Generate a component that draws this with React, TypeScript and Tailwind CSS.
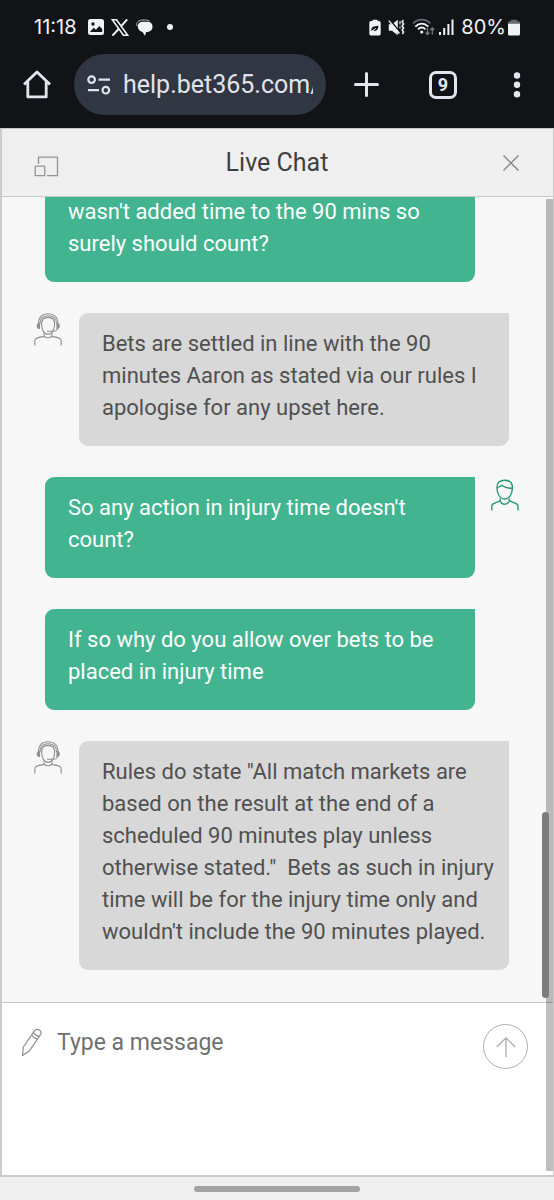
import type { ReactNode } from "react";

interface Message {
  from: "user" | "agent";
  text: string;
  showAvatar: boolean;
}

const messages: Message[] = [
  {
    from: "user",
    text: "wasn't added time to the 90 mins so surely should count?",
    showAvatar: false,
  },
  {
    from: "agent",
    text: "Bets are settled in line with the 90 minutes Aaron as stated via our rules I apologise for any upset here.",
    showAvatar: true,
  },
  {
    from: "user",
    text: "So any action in injury time doesn't count?",
    showAvatar: true,
  },
  {
    from: "user",
    text: "If so why do you allow over bets to be placed in injury time",
    showAvatar: false,
  },
  {
    from: "agent",
    text: 'Rules do state "All match markets are based on the result at the end of a scheduled 90 minutes play unless otherwise stated."  Bets as such in injury time will be for the injury time only and wouldn\'t include the 90 minutes played.',
    showAvatar: true,
  },
];

function StatusBar() {
  return (
    <div className="flex h-[54px] items-center justify-between pl-[34px] pr-[34px] font-[Inter,sans-serif] text-[20px] text-[#f1f2f6]">
      <div className="flex items-center">
        <span className="mr-[11px]">11:18</span>
        {/* gallery */}
        <svg width="16" height="16" viewBox="0 0 16 16" className="mr-[7px]">
          <rect width="16" height="16" rx="2.5" fill="#f1f2f6" />
          <circle cx="5" cy="5" r="1.7" fill="#111317" />
          <path d="M2 13l3.7-4.3 2.3 2 3.2-3.6L14.2 10v3z" fill="#111317" />
        </svg>
        {/* X */}
        <svg width="18" height="17" viewBox="0 0 18 17" className="mr-[7px]" fill="none" stroke="#f1f2f6">
          <path d="M1.3.8h4.2l11.2 15.4h-4.2z" strokeWidth="1.6" />
          <path d="M16.2.4L10 7.4M7.6 10L1.4 16.6" strokeWidth="2" />
        </svg>
        {/* chat */}
        <svg width="17" height="17" viewBox="0 0 17 17" className="mr-[14px]">
          <path d="M1 7C-.3 3.300 3 1 7 1c3.500 0 5 .2 6.500 1" fill="none" stroke="#b8bac0" strokeWidth="1" />
          <path d="M6.500 2.800h5c3 0 5 2 5 4.800 0 3.400-2.200 5.400-5 5.400h-1.300L9 16.800 6.500 13C3.800 12.500 1.800 10.500 1.800 7.600c0-2.800 2-4.800 4.700-4.800z" fill="#f1f2f6" />
        </svg>
        <span className="size-[6px] rounded-full bg-[#f1f2f6]" />
      </div>
      <div className="flex items-center">
        {/* battery saver */}
        <svg width="12" height="17" viewBox="0 0 12 17" className="mr-[7px]">
          <path d="M3.500 2V.8h5V2H10a1.700 1.700 0 0 1 1.700 1.700v11A1.700 1.700 0 0 1 10 16.400H2A1.700 1.700 0 0 1 .3 14.700v-11A1.700 1.700 0 0 1 2 2z" fill="#f1f2f6" />
          <path d="M2.300 12c-.3-3.500 2-5 7.200-5.200-.3 4-2.300 5.700-5.200 5.200l2.500-2.500" fill="#111317" />
          <path d="M2 12.700l5-3.400" stroke="#f1f2f6" strokeWidth=".8" />
        </svg>
        {/* vibrate */}
        <svg width="17" height="17" viewBox="0 0 17 17" className="mr-[7px]">
          <path d="M.8 5.300H4L9.800.8v15.400L4 11.700H.8z" fill="#f1f2f6" />
          <path d="M1.800.8l9.500 11.500" stroke="#111317" strokeWidth="1.500" />
          <path d="M.8 1.600l10.700 12.900" stroke="#f1f2f6" strokeWidth="1.400" />
          <path d="M12 2v3.500M12 7.500v2" stroke="#f1f2f6" strokeWidth="1.200" />
          <path d="M15.300 1l-1.200 2 1.500 2-1.500 2 1.500 2-1.500 2 1.500 2-1.200 2" fill="none" stroke="#f1f2f6" strokeWidth="1.500" />
        </svg>
        {/* wifi */}
        <svg width="23" height="18" viewBox="0 0 23 18" className="mr-[4px]" fill="none">
          <path d="M1 5.500C6 .3 13.500.3 18.500 5.500" stroke="#65676c" strokeWidth="1.800" />
          <path d="M3.300 8.600c4-4 9-4 13 0M6 11.300c2.300-2.200 5.200-2.200 7.500 0" stroke="#f1f2f6" strokeWidth="1.800" />
          <circle cx="9.700" cy="14" r="1.600" fill="#f1f2f6" />
          <path d="M15.500 10v6.500M13.500 14.500l2 2 2-2M20.300 16.500V10M18.300 12l2-2 2 2" stroke="#777a80" strokeWidth="1.300" />
        </svg>
        {/* signal */}
        <svg width="15" height="16" viewBox="0 0 15 16" className="mr-[7px]" fill="#f1f2f6">
          <path d="M0 13h2v3H0zM4.200 9h2v7h-2zM8.400 5h2v11h-2zM12.500.500h2V16h-2z" />
        </svg>
        <span className="mr-[2px]">80%</span>
        {/* battery */}
        <svg width="12" height="17" viewBox="0 0 12 17">
          <path d="M3 2V.8h6V2h1a2 2 0 0 1 2 2v1H0V4a2 2 0 0 1 2-2z" fill="#66686d" />
          <path d="M0 4.700h12V15a1.500 1.500 0 0 1-1.500 1.500h-9A1.500 1.500 0 0 1 0 15z" fill="#f1f2f6" />
        </svg>
      </div>
    </div>
  );
}

function BrowserBar() {
  return (
    <div className="flex h-[61px] items-center pl-[23px] pr-[29px]">
      <button aria-label="Home" className="mr-[23px]">
        <svg width="28" height="29" viewBox="0 0 28 29" fill="none" stroke="#e4e5ee" strokeWidth="2.800" strokeLinejoin="round">
          <path d="M1 14.600L14 1.900l13 12.700" />
          <path d="M4.800 12v14.900h18.400V12" />
        </svg>
      </button>
      <div className="flex h-[61px] min-w-0 flex-1 items-center rounded-full bg-[#313643] pl-[13px] pr-[13px]">
        <svg width="24" height="20" viewBox="0 0 24 20" fill="none" stroke="#e1e3ec" strokeWidth="2.200" className="mr-[12px] shrink-0">
          <circle cx="4.600" cy="4.600" r="3.300" />
          <path d="M11.500 4.600H23M1 15.200h11" />
          <circle cx="18.800" cy="15.200" r="3.300" />
        </svg>
        <input
          aria-label="Address"
          readOnly
          defaultValue="help.bet365.com/"
          className="w-full min-w-0 bg-transparent text-[25px] text-[#e1e3ec] outline-none"
        />
      </div>
      <button aria-label="New tab" className="ml-[28px]">
        <svg width="25" height="25" viewBox="0 0 25 25" stroke="#e4e5ee" strokeWidth="3" strokeLinecap="round">
          <path d="M12.500 1.500v22M1.500 12.500h22" />
        </svg>
      </button>
      <button
        aria-label="9 open tabs"
        className="ml-[50px] flex size-[28px] items-center justify-center rounded-[7px] border-3 border-[#e4e5ee] text-[18px] font-bold text-[#e4e5ee]"
      >
        9
      </button>
      <button aria-label="Menu" className="ml-[52px]">
        <svg width="16" height="26" viewBox="0 0 16 26" fill="#e4e5ee">
          <circle cx="8" cy="3.500" r="3.200" />
          <circle cx="8" cy="12.800" r="3.200" />
          <circle cx="8" cy="22.200" r="3.200" />
        </svg>
      </button>
    </div>
  );
}

function AgentAvatar() {
  return (
    <svg width="28" height="34" viewBox="0 0 28 34" fill="none" stroke="#8f8f8f" strokeWidth="1.100">
      <path d="M4.500 11C4.500 4.500 8 .8 14 .8S24 4.500 24 11" />
      <path d="M6 11C6 5.500 9 2.800 14 2.800s8.500 2.700 8.500 8.200" />
      <path d="M7.600 11c0-4.200 2.400-6.600 6.500-6.600s6.500 2.400 6.500 6.600c0 6-2.500 10.300-6.500 10.300S7.600 17 7.600 11z" />
      <path d="M5.500 10.500c-3 0-3 5 0 5zM23 10.500c3 0 3 5 0 5z" fill="#8f8f8f" />
      <path d="M23.500 15.500c-.4 2.200-2.500 2.800-5 2.700h-5.500" />
      <path d="M10 20.500v2.300c1 2.500 7 2.500 8 0v-2.300" />
      <path d="M.8 32.500v-4.500c0-3 2.500-4 9-4.400M27.200 32.500v-4.500c0-3-2.500-4-9-4.400" />
    </svg>
  );
}

function UserAvatar() {
  return (
    <svg width="28" height="34" viewBox="0 0 28 34" fill="none" stroke="#289871" strokeWidth="1.400">
      <path d="M6 10.500C6 5.500 8.500 3.300 13.700 3.300S21.400 5.500 21.400 10.500c0 6-2.800 11.500-7.700 11.500S6 16.500 6 10.500z" />
      <path d="M6 10.500c2 .2 3.200-2 5-2 3 2.200 6 3 10.400 2.700" />
      <path d="M9.500 21.500l-.6 2c2 5 7.600 5 9.600 0l-.6-2" />
      <path d="M.8 33.500v-4c0-2.500 1.500-3.200 4-3.800l4.500-1.800M27 33.500v-4c0-2.500-1.500-3.200-4-3.800l-4.700-1.800" />
    </svg>
  );
}

function AvatarSlot({ children }: { children: ReactNode }) {
  return <div className="w-[28px] shrink-0">{children}</div>;
}

function MessageRow({ message }: { message: Message }) {
  if (message.from === "agent") {
    return (
      <li className="flex gap-[17px] pl-[32px] pr-[44px]">
        <AvatarSlot>{message.showAvatar && <AgentAvatar />}</AvatarSlot>
        <p className="flex-1 whitespace-pre-wrap rounded-[9px] rounded-tr-none bg-[#d8d8d8] pt-[15px] pr-[12px] pb-[22px] pl-[23px] text-[#505050]">
          {message.text}
        </p>
      </li>
    );
  }
  return (
    <li className="flex gap-[16px] pl-[43px] pr-[34px]">
      <p className="flex-1 whitespace-pre-wrap rounded-[9px] rounded-tr-none bg-[#42b490] pt-[15px] pr-[12px] pb-[22px] pl-[23px] text-white">
        {message.text}
      </p>
      <AvatarSlot>{message.showAvatar && <UserAvatar />}</AvatarSlot>
    </li>
  );
}

function ChatHeader() {
  return (
    <header className="flex h-[69px] shrink-0 items-center justify-between border-y border-[#c8c8c8] bg-[#efefef] pl-[32px] pr-[26px]">
      <button aria-label="Pop out" className="pt-[7px]">
        <svg width="25" height="21" viewBox="0 0 25 21" fill="none" stroke="#939393" strokeWidth="1.300">
          <path d="M4.500 8V1.200h19v18.500H13" />
          <rect x="1.200" y="10.200" width="9.600" height="9.500" rx=".8" />
        </svg>
      </button>
      <h1 className="text-[25px] text-[#404040]">Live Chat</h1>
      <button aria-label="Close" className="flex w-[32px] justify-center">
        <svg width="18" height="18" viewBox="0 0 18 18" stroke="#878787" strokeWidth="1.400">
          <path d="M1.500 1.500l15 15M16.500 1.500l-15 15" />
        </svg>
      </button>
    </header>
  );
}

function Composer() {
  return (
    <form className="flex h-[173px] shrink-0 items-start border-t border-[#c8c8c8] bg-white pt-[21px] pl-[19px] pr-[25px]">
      <svg width="22" height="29" viewBox="0 0 22 29" fill="none" stroke="#8c8c8c" strokeWidth="1.200" strokeLinejoin="round" className="mt-[4px] mr-[14px] shrink-0">
        <path d="M1.500 27.500l.8-8.500L13.500 2.800c1.300-1.800 3-1.900 4.700-.8s2.500 2.900 1.300 4.700L8.300 23z" />
        <path d="M10.700 6.800c1 2.200 3.200 3.800 5.800 4.100M12.500 4.200c1 2.200 3.200 3.800 5.800 4.100" />
      </svg>
      <label htmlFor="message" className="sr-only">
        Message
      </label>
      <textarea
        id="message"
        placeholder="Type a message"
        className="h-[120px] min-w-0 flex-1 resize-none bg-transparent pt-[3px] text-[23px] outline-none placeholder:text-[#707070]"
      />
      <button
        type="button"
        aria-label="Send"
        className="flex size-[45px] shrink-0 items-center justify-center rounded-full border border-[#b0b0b0]"
      >
        <svg width="20" height="20" viewBox="0 0 20 20" fill="none" stroke="#ababab" strokeWidth="1.300">
          <path d="M10 20V.9M.8 10L10 .9l9.200 9.100" />
        </svg>
      </button>
    </form>
  );
}

export default function App() {
  return (
    <div className="flex h-screen flex-col overflow-hidden bg-[#efefef] font-[Roboto,sans-serif]">
      <div className="shrink-0 bg-[#111317] pb-[13px]">
        <StatusBar />
        <BrowserBar />
      </div>

      <main className="relative flex min-h-0 flex-1 flex-col border-r border-b-2 border-l-2 border-[#cbcbcb] text-[22px] leading-[32px]">
        <ChatHeader />
        <ul className="flex min-h-0 flex-1 flex-col justify-end gap-[31px] overflow-hidden bg-[#f7f7f7] pb-[32px]">
          {messages.map((message, i) => (
            <MessageRow key={i} message={message} />
          ))}
        </ul>
        <Composer />

        {/* scrollbars */}
        <div className="absolute top-[71px] right-0 bottom-[4px] w-[7px] bg-black/25" />
        <div className="absolute right-[4px] bottom-[177px] h-[186px] w-[7px] rounded-full bg-[#7c7c7c]" />
      </main>

      <div className="flex h-[23px] shrink-0 items-center justify-center">
        <div className="h-[6px] w-[30%] rounded-full bg-[#a3a3a3]" />
      </div>
    </div>
  );
}
